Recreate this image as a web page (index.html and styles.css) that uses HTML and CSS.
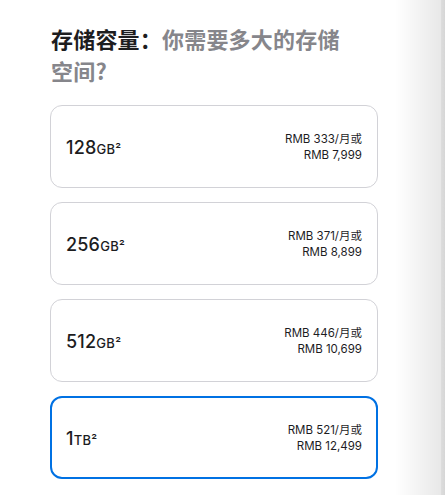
FILE: index.html
```html
<!DOCTYPE html>
<html lang="zh-CN">
<head>
<meta charset="utf-8">
<link rel="stylesheet" href="styles.css">
</head>
<body>
<div class="page">
  <section class="storage">
    <h2 class="title"><span class="strong">存储容量：</span><span class="muted">你需要多大的存储空间?</span></h2>
    <div class="options">
      <div class="option">
        <div class="cap">128<span class="unit">GB²</span></div>
        <div class="price">RMB 333/月或<br>RMB 7,999</div>
      </div>
      <div class="option">
        <div class="cap">256<span class="unit">GB²</span></div>
        <div class="price">RMB 371/月或<br>RMB 8,899</div>
      </div>
      <div class="option">
        <div class="cap">512<span class="unit">GB²</span></div>
        <div class="price">RMB 446/月或<br>RMB 10,699</div>
      </div>
      <div class="option selected">
        <div class="cap">1<span class="unit">TB²</span></div>
        <div class="price">RMB 521/月或<br>RMB 12,499</div>
      </div>
    </div>
  </section>
  <div class="edge-shade"></div>
</div>
</body>
</html>
```
FILE: styles.css
```css
html, body {
  margin: 0;
  padding: 0;
  background: #fff;
}
body {
  font-family: "Inter", "Liberation Sans", "Noto Sans CJK SC", sans-serif;
  color: #1d1d1f;
}
.page {
  position: relative;
  width: 445px;
  height: 495px;
  overflow: hidden;
}
.storage {
  padding: 22px 0 0 50px;
  width: 328px;
}
.title {
  margin: 0 0 19px 1px;
  font-size: 22px;
  line-height: 32px;
  font-weight: 700;
  font-family: "Noto Sans CJK SC", sans-serif;
  letter-spacing: 0.2px;
  width: 300px;
}
.strong { color: #1d1d1f; }
.muted { color: #86868b; }
.options {
  display: flex;
  flex-direction: column;
  gap: 14px;
}
.option {
  box-sizing: border-box;
  height: 83px;
  border: 1px solid #d2d2d7;
  border-radius: 12px;
  display: flex;
  align-items: center;
  justify-content: space-between;
  padding: 0 15px 0 15px;
}
.option.selected {
  border: 2px solid #0071e3;
  padding: 0 14px 0 14px;
}
.cap {
  font-size: 18px;
  font-weight: 500;
  letter-spacing: 0.2px;
  margin-top: 2px;
}
.unit {
  font-size: 13px;
  letter-spacing: 0.3px;
}
.price {
  text-align: right;
  font-size: 11.5px;
  line-height: 16px;
  color: #1d1d1f;
}
.edge-shade {
  position: absolute;
  top: 0;
  right: 0;
  width: 50px;
  height: 100%;
  background: linear-gradient(to right, rgba(230,230,230,0) 0%, #e8e8e8 92%, #dcdcdc 93%, #d6d6d6 100%);
}
```
